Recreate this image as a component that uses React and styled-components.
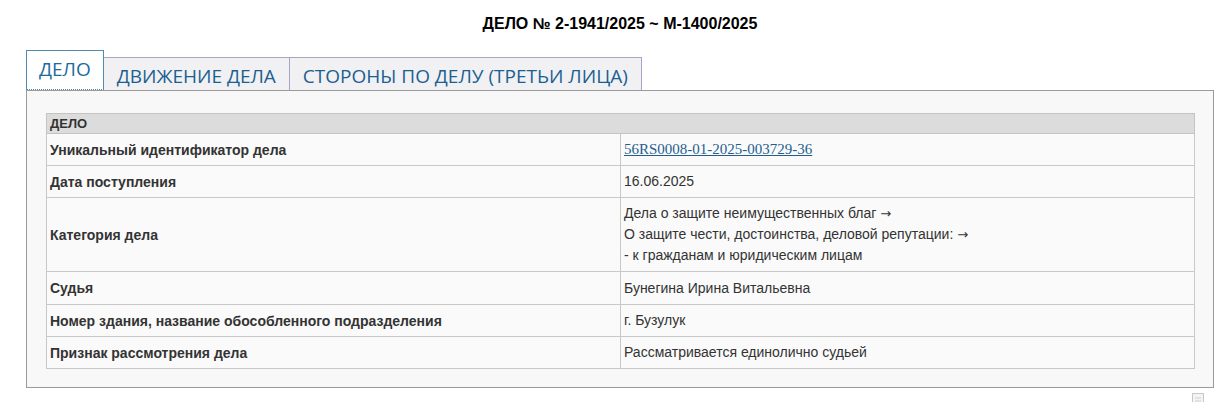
import React from "react";
import styled, { createGlobalStyle } from "styled-components";

const Global = createGlobalStyle`
  body {
    margin: 0;
    background: #ffffff;
    font-family: "Liberation Sans", Arial, sans-serif;
  }
`;

const Page = styled.div`
  width: 1230px;
  padding: 14px 16px 0 26px;
  box-sizing: border-box;
`;

const Title = styled.h1`
  margin: 0 0 16px;
  text-align: center;
  font-size: 16px;
  font-weight: bold;
  color: #000;
  line-height: 20px;
`;

const Tabs = styled.div`
  display: flex;
  align-items: flex-end;
  height: 40px;
`;

const Tab = styled.div`
  font-family: "Open Sans", sans-serif;
  font-size: 19px;
  color: ${(p) => (p.$active ? "#1c6b9c" : "#1c5f91")};
  padding: 0 ${(p) => (p.$active ? "12px" : "13px")};
  height: ${(p) => (p.$active ? "40px" : "33px")};
  line-height: 36px;
  box-sizing: border-box;
  background: ${(p) => (p.$active ? "#ffffff" : "#f1f1f3")};
  border: 1px solid ${(p) => (p.$active ? "#4f8bb0" : "#a4a4c4")};
  border-bottom: ${(p) => (p.$active ? "1px dotted #4f8bb0" : "none")};
  margin-left: ${(p) => (p.$active ? "0" : "-1px")};
  white-space: nowrap;
  position: relative;
  z-index: ${(p) => (p.$active ? 2 : 1)};
`;

const Panel = styled.div`
  width: 1188px;
  border: 1px solid #9a9a9a;
  background: #f8f8f8;
  padding: 22px 18px 18px 19px;
  box-sizing: border-box;
`;

const Table = styled.table`
  width: 100%;
  border-collapse: collapse;
  font-size: 14px;
  color: #333;
`;

const Head = styled.td`
  background: #dcdcdc;
  border: 1px solid #c4c4c4;
  font-weight: bold;
  height: 19px;
  padding: 0 3px;
  font-size: 13px;
  color: #333;
`;

const Label = styled.td`
  width: 567px;
  border: 1px solid #c8c8c8;
  font-weight: bold;
  font-size: 14px;
  padding: 0 3px;
  height: ${(p) => p.$h || 31}px;
  background: #fafafa;
`;

const Value = styled.td`
  border: 1px solid #c8c8c8;
  font-size: 14px;
  padding: 0 3px;
  line-height: 21px;
  background: #fafafa;
`;

const Arrow = styled.span`
  font-family: "DejaVu Sans", sans-serif;
  font-size: 13px;
`;

const Link = styled.a`
  font-family: "Liberation Serif", "Times New Roman", serif;
  font-size: 15px;
  color: #1f5f8f;
  text-decoration: underline;
`;

const Footer = styled.div`
  display: flex;
  justify-content: flex-end;
  padding: 5px 10px 0 0;
`;

const PrintIcon = () => (
  <svg width="12" height="14" viewBox="0 0 12 14">
    <rect x="0.5" y="0.5" width="11" height="13" fill="#f4f4f4" stroke="#c8c8c8" />
    <line x1="3" y1="5" x2="9" y2="5" stroke="#cfcfcf" />
    <line x1="3" y1="8" x2="9" y2="8" stroke="#cfcfcf" />
  </svg>
);

const rows = [
  { label: "Дата поступления", value: "16.06.2025" },
  {
    label: "Категория дела",
    h: 73,
    value: (
      <>
        Дела о защите неимущественных благ <Arrow>→</Arrow>
        <br />
        О защите чести, достоинства, деловой репутации: <Arrow>→</Arrow>
        <br />- к гражданам и юридическим лицам
      </>
    ),
  },
  { label: "Судья", value: "Бунегина Ирина Витальевна", h: 32 },
  { label: "Номер здания, название обособленного подразделения", value: "г. Бузулук" },
  { label: "Признак рассмотрения дела", value: "Рассматривается единолично судьей", h: 31 },
];

export default function App() {
  return (
    <Page>
      <Global />
      <Title>ДЕЛО № 2-1941/2025 ~ М-1400/2025</Title>
      <Tabs>
        <Tab $active>ДЕЛО</Tab>
        <Tab>ДВИЖЕНИЕ ДЕЛА</Tab>
        <Tab>СТОРОНЫ ПО ДЕЛУ (ТРЕТЬИ ЛИЦА)</Tab>
      </Tabs>
      <Panel>
        <Table>
          <tbody>
            <tr>
              <Head colSpan={2}>ДЕЛО</Head>
            </tr>
            <tr>
              <Label>Уникальный идентификатор дела</Label>
              <Value>
                <Link href="#">56RS0008-01-2025-003729-36</Link>
              </Value>
            </tr>
            {rows.map((r) => (
              <tr key={r.label}>
                <Label $h={r.h}>{r.label}</Label>
                <Value>{r.value}</Value>
              </tr>
            ))}
          </tbody>
        </Table>
      </Panel>
      <Footer>
        <PrintIcon />
      </Footer>
    </Page>
  );
}
